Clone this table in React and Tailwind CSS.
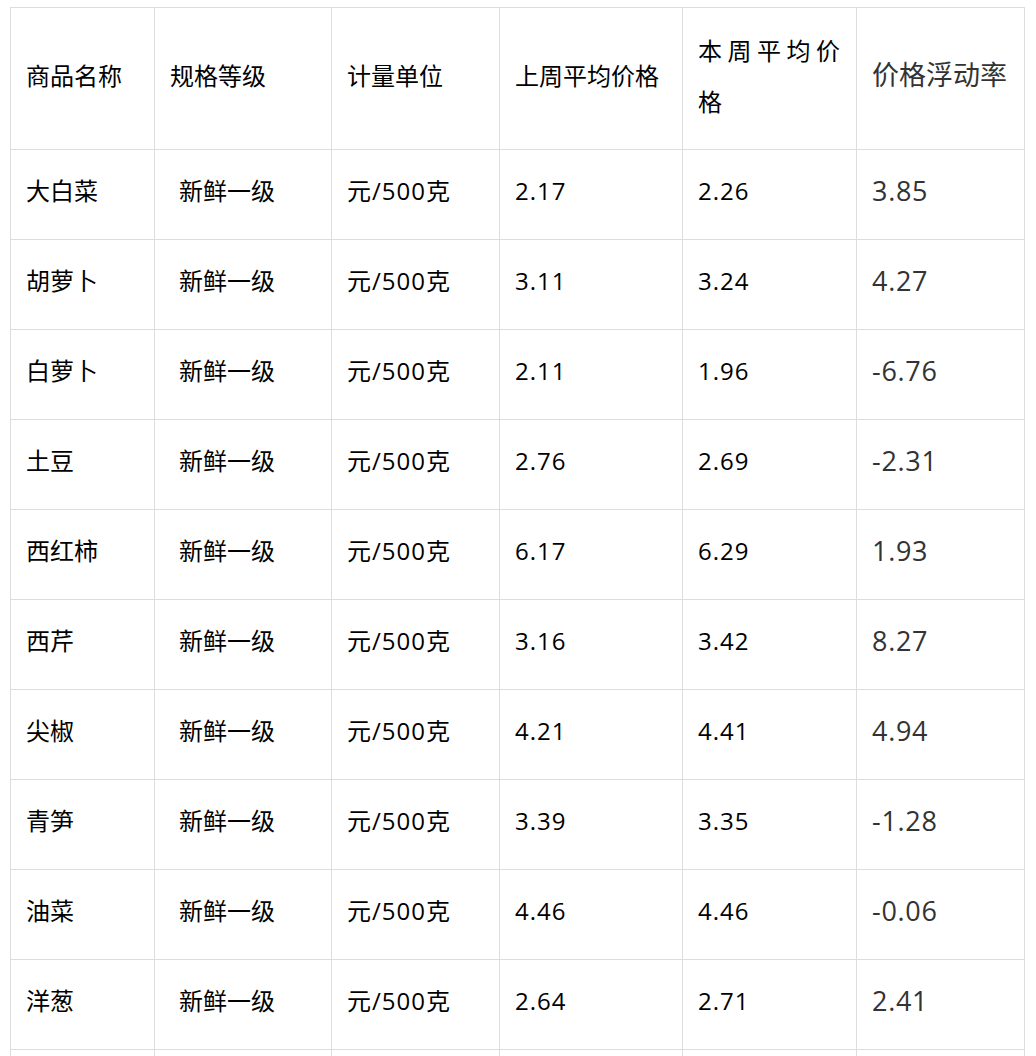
import React from "react";

const rows = [
  ["大白菜", "新鲜一级", "元/500克", "2.17", "2.26", "3.85"],
  ["胡萝卜", "新鲜一级", "元/500克", "3.11", "3.24", "4.27"],
  ["白萝卜", "新鲜一级", "元/500克", "2.11", "1.96", "-6.76"],
  ["土豆", "新鲜一级", "元/500克", "2.76", "2.69", "-2.31"],
  ["西红柿", "新鲜一级", "元/500克", "6.17", "6.29", "1.93"],
  ["西芹", "新鲜一级", "元/500克", "3.16", "3.42", "8.27"],
  ["尖椒", "新鲜一级", "元/500克", "4.21", "4.41", "4.94"],
  ["青笋", "新鲜一级", "元/500克", "3.39", "3.35", "-1.28"],
  ["油菜", "新鲜一级", "元/500克", "4.46", "4.46", "-0.06"],
  ["洋葱", "新鲜一级", "元/500克", "2.64", "2.71", "2.41"],
];

const cell =
  "border-l border-t border-[#dddddd] flex items-center pl-[15px] pr-[16px]";

export default function App() {
  return (
    <div
      className="bg-white w-[1036px] h-[1056px] overflow-hidden pt-[7px] pl-[10px]"
      style={{ fontFamily: '"Open Sans", "Noto Sans CJK SC", sans-serif' }}
    >
      <div className="grid grid-cols-[144px_177px_168px_183px_174px_168px] w-[1015px] border-r border-b border-[#dddddd]">
        {/* header */}
        <div className={`${cell} pb-[6px] h-[142px] text-[24px] text-black`}>商品名称</div>
        <div className={`${cell} pb-[6px] h-[142px] text-[24px] text-black`}>规格等级</div>
        <div className={`${cell} pb-[6px] h-[142px] text-[24px] text-black`}>计量单位</div>
        <div className={`${cell} pb-[6px] h-[142px] text-[24px] text-black whitespace-nowrap`}>上周平均价格</div>
        <div className={`${cell} pb-[6px] h-[142px] text-[24px] text-black`}>
          <p className="w-full text-justify leading-[51px]">本周平均价格</p>
        </div>
        <div className={`${cell} pb-[6px] h-[142px] text-[27px] text-[#333333] whitespace-nowrap`}>价格浮动率</div>

        {rows.map((r, i) => (
          <React.Fragment key={i}>
            <div className={`${cell} pb-[7px] h-[90px] text-[24px] text-black`}>{r[0]}</div>
            <div className={`${cell} pb-[7px] h-[90px] text-[24px] text-black !pl-[24px]`}>{r[1]}</div>
            <div className={`${cell} pb-[7px] h-[90px] text-[24px] text-black whitespace-nowrap tracking-[1px]`}>{r[2]}</div>
            <div className={`${cell} pb-[7px] h-[90px] text-[24px] text-black tracking-[1px]`}>{r[3]}</div>
            <div className={`${cell} pb-[7px] h-[90px] text-[24px] text-black tracking-[1px]`}>{r[4]}</div>
            <div className={`${cell} pb-[7px] h-[90px] text-[27px] text-[#333333] tracking-[0.7px]`}>{r[5]}</div>
          </React.Fragment>
        ))}
        {[0, 1, 2, 3, 4, 5].map((k) => (
          <div key={`e${k}`} className={`${cell} h-[90px]`}></div>
        ))}
      </div>
    </div>
  );
}
